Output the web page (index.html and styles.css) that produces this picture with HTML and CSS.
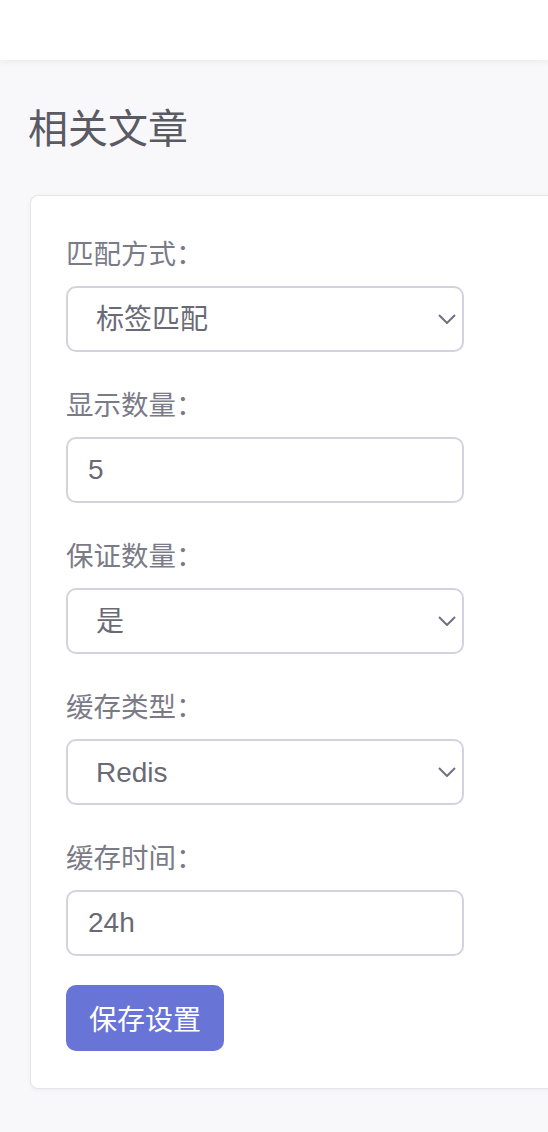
FILE: index.html
```html
<!DOCTYPE html>
<html lang="zh-CN">
<head>
<meta charset="utf-8">
<title>相关文章</title>
<link rel="stylesheet" href="styles.css">
</head>
<body>
<header class="topbar"></header>
<main class="page">
  <h1 class="title">相关文章</h1>
  <section class="card">
    <div class="field">
      <label class="label">匹配方式：</label>
      <div class="select-wrap">
        <select class="control select"><option>标签匹配</option></select>
        <svg class="chevron" width="18" height="10" viewBox="0 0 18 10"><path d="M1 1 L9 9 L17 1" fill="none" stroke="#707080" stroke-width="2"/></svg>
      </div>
    </div>
    <div class="field">
      <label class="label">显示数量：</label>
      <input class="control input" type="text" value="5">
    </div>
    <div class="field">
      <label class="label">保证数量：</label>
      <div class="select-wrap">
        <select class="control select"><option>是</option></select>
        <svg class="chevron" width="18" height="10" viewBox="0 0 18 10"><path d="M1 1 L9 9 L17 1" fill="none" stroke="#707080" stroke-width="2"/></svg>
      </div>
    </div>
    <div class="field">
      <label class="label">缓存类型：</label>
      <div class="select-wrap">
        <select class="control select"><option>Redis</option></select>
        <svg class="chevron" width="18" height="10" viewBox="0 0 18 10"><path d="M1 1 L9 9 L17 1" fill="none" stroke="#707080" stroke-width="2"/></svg>
      </div>
    </div>
    <div class="field">
      <label class="label">缓存时间：</label>
      <input class="control input" type="text" value="24h">
    </div>
    <button class="btn">保存设置</button>
  </section>
</main>
</body>
</html>
```

FILE: styles.css
```css
* { box-sizing: border-box; }
html, body {
  margin: 0;
  padding: 0;
  overflow: hidden;
}
body {
  width: 548px;
  height: 1132px;
  background: #f8f8fa;
  font-family: "Liberation Sans", "Noto Sans CJK SC", sans-serif;
}
.topbar {
  height: 60px;
  background: #ffffff;
  box-shadow: 0 2px 6px rgba(40, 40, 70, 0.06);
  position: relative;
  z-index: 1;
}
.page {
  padding: 0 0 0 30px;
}
.title {
  margin: 0 0 0 -2px;
  height: 135px;
  padding-bottom: 4px;
  font-size: 40px;
  line-height: 56px;
  font-weight: 400;
  color: #5a5a65;
  font-family: "Noto Sans CJK SC", sans-serif;
  display: flex;
  align-items: center;
}
.card {
  width: 560px;
  background: #ffffff;
  border: 1px solid #e4e4ec;
  border-right: none;
  border-radius: 8px 0 0 8px;
  box-shadow: 0 1px 4px rgba(40, 40, 80, 0.05);
  padding: 35px 36px 37px 35px;
  display: flex;
  flex-direction: column;
  align-items: flex-start;
}
.field {
  display: flex;
  flex-direction: column;
  width: 398px;
  margin-bottom: 30px;
}
.field:last-of-type { margin-bottom: 29px; }
.label {
  font-family: "Noto Sans CJK SC", sans-serif;
  font-size: 27.5px;
  line-height: 42px;
  color: #7b7b88;
  margin-bottom: 13px;
}
.control {
  display: block;
  width: 398px;
  height: 66px;
  border: 2px solid #d3d3e0;
  border-radius: 10px;
  background: #ffffff;
  font-family: "Liberation Sans", "Noto Sans CJK SC", sans-serif;
  font-size: 28px;
  color: #6a6a76;
  outline: none;
  margin: 0;
}
.input {
  padding: 0 20px;
}
.select {
  -webkit-appearance: none;
  appearance: none;
  padding: 0 28px;
}
.select-wrap {
  position: relative;
  width: 398px;
}
.chevron {
  position: absolute;
  right: 8px;
  top: 28px;
  pointer-events: none;
}
.btn {
  height: 66px;
  padding: 0 23px;
  border: none;
  border-radius: 10px;
  background: #6874d6;
  color: #ffffff;
  font-family: "Noto Sans CJK SC", sans-serif;
  font-size: 28px;
  cursor: pointer;
}
```
